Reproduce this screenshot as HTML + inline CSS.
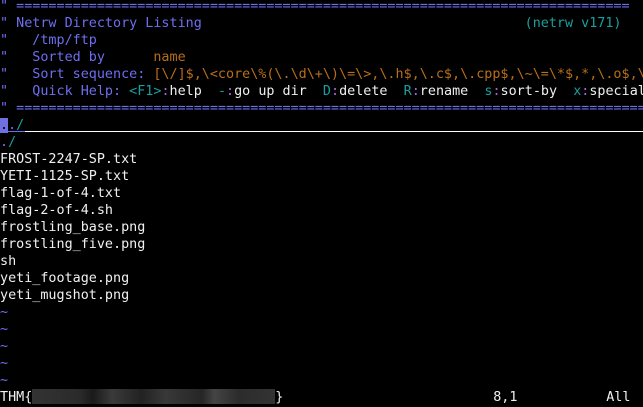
<!DOCTYPE html>
<html><head><meta charset="utf-8"><style>
html,body{margin:0;padding:0;background:#000;width:643px;height:407px;overflow:hidden}
pre{margin:0;position:absolute;left:0;top:-2.5px;font-family:"DejaVu Sans Mono","Liberation Mono",monospace;font-size:13.42px;line-height:17px;color:#f0f0f0;white-space:pre;width:643px;overflow:hidden}
.b{color:#6e6ef0}.o{color:#b86e1a}.t{color:#18a0a0}.m{color:#b060e0}
.cur{background:#7070e0;color:#000}
.ul{position:absolute;left:25px;top:131px;width:618px;height:1px;background:#fff}
.ul2{position:absolute;left:0;top:131px;width:25px;height:1px;background:#6e6ef0}
.blur{display:inline-block;width:243px;height:15px;vertical-align:-3px;background:linear-gradient(90deg,#333 0,#2a2a2a 20%,#1a1a1a 25%,#3a3a3a 33%,#222 45%,#383838 55%,#262626 70%,#444 75%,#2c2c2c 85%,#333 100%)}
</style></head><body>
<pre><span class="b">" ============================================================================</span>
<span class="b">" Netrw Directory Listing                                        </span><span class="t">(netrw v171)</span>
<span class="b">"   /tmp/ftp</span>
<span class="b">"   Sorted by      </span><span class="o">name</span>
<span class="b">"   Sort sequence: </span><span class="o">[\/]$,\&lt;core\%(\.\d\+\)\=\&gt;,\.h$,\.c$,\.cpp$,\~\=\*$,*,\.o$,\</span>
<span class="b">"   Quick Help: </span><span class="t">&lt;F1&gt;</span><span class="m">:</span>help  <span class="t">-</span><span class="m">:</span>go up dir  <span class="t">D</span><span class="m">:</span>delete  <span class="t">R</span><span class="m">:</span>rename  <span class="t">s</span><span class="m">:</span>sort-by  <span class="t">x</span><span class="m">:</span>special
<span class="b">" ==============================================================================</span>
<span class="cur">.</span><span class="b">.</span><span class="t">/</span>
<span class="b">.</span><span class="t">/</span>
FROST-2247-SP.txt
YETI-1125-SP.txt
flag-1-of-4.txt
flag-2-of-4.sh
frostling_base.png
frostling_five.png
sh
yeti_footage.png
yeti_mugshot.png
<span class="b">~</span>
<span class="b">~</span>
<span class="b">~</span>
<span class="b">~</span>
<span class="b">~</span>
THM{<span class="blur"></span>}                          8,1           All</pre>
<div class="ul"></div><div class="ul2"></div>
</body></html>
